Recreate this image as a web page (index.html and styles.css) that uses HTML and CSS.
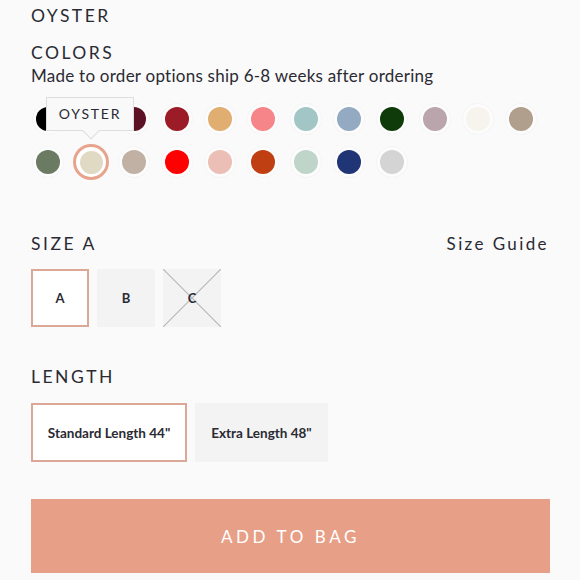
FILE: index.html
```html
<!DOCTYPE html>
<html>
<head>
<meta charset="utf-8">
<link rel="stylesheet" href="styles.css">
</head>
<body>
<div class="page">
  <div class="name">OYSTER</div>
  <div class="label colors-label">COLORS</div>
  <div class="note">Made to order options ship 6-8 weeks after ordering</div>

  <div class="swatches">
    <div class="sw"><span style="background:#000000"></span></div>
    <div class="sw"><span style="background:#3a1018"></span></div>
    <div class="sw"><span style="background:#5c1222"></span></div>
    <div class="sw"><span style="background:#9b1b26"></span></div>
    <div class="sw"><span style="background:#e1ae72"></span></div>
    <div class="sw"><span style="background:#f6858a"></span></div>
    <div class="sw"><span style="background:#a2c6c6"></span></div>
    <div class="sw"><span style="background:#93aac2"></span></div>
    <div class="sw"><span style="background:#0f3b0a"></span></div>
    <div class="sw"><span style="background:#bba5ad"></span></div>
    <div class="sw"><span style="background:#f7f4ee"></span></div>
    <div class="sw"><span style="background:#b19f8e"></span></div>

    <div class="sw"><span style="background:#6b7a62"></span></div>
    <div class="sw selected">
      <span style="background:#e0dac5"></span>
      <div class="tooltip">OYSTER</div>
    </div>
    <div class="sw"><span style="background:#c1b1a4"></span></div>
    <div class="sw"><span style="background:#ff0000"></span></div>
    <div class="sw"><span style="background:#ebbfb5"></span></div>
    <div class="sw"><span style="background:#c03f12"></span></div>
    <div class="sw"><span style="background:#c0d5c9"></span></div>
    <div class="sw"><span style="background:#1f3576"></span></div>
    <div class="sw"><span style="background:#d4d4d4"></span></div>
  </div>

  <div class="size-head">
    <div class="label">SIZE A</div>
    <div class="guide">Size Guide</div>
  </div>
  <div class="sizes">
    <div class="box active">A</div>
    <div class="box">B</div>
    <div class="box disabled">
      <svg class="cross" viewBox="0 0 58 58" preserveAspectRatio="none"><line x1="0" y1="0" x2="58" y2="58"/><line x1="58" y1="0" x2="0" y2="58"/></svg>
      <span>C</span>
    </div>
  </div>

  <div class="label length-label">LENGTH</div>
  <div class="lengths">
    <div class="lbox active standard">Standard Length 44"</div>
    <div class="lbox extra">Extra Length 48"</div>
  </div>

  <div class="bag">ADD TO BAG</div>
</div>
</body>
</html>
```

FILE: styles.css
```css
html, body {
  margin: 0;
  padding: 0;
  background: #fafafa;
}
body {
  font-family: "Lato", "Open Sans", sans-serif;
  color: #2a2a33;
}
.page {
  width: 519px;
  padding: 5px 0 0 31px;
}
.name, .label {
  font-size: 17.5px;
  letter-spacing: 2.5px;
  line-height: 22px;
  font-weight: 400;
}
.colors-label {
  margin-top: 15px;
}
.note {
  font-size: 17px;
  line-height: 22px;
  margin-top: 1px;
  letter-spacing: 0.25px;
}
.swatches {
  display: grid;
  grid-template-columns: repeat(12, 30px);
  grid-auto-rows: 30px;
  column-gap: 13px;
  row-gap: 13px;
  margin: 17px 0 0 2px;
}
.sw {
  position: relative;
  width: 30px;
  height: 30px;
  border-radius: 50%;
  background: #fcfcfc;
  box-shadow: 0 0 0 1px #f5f5f5;
  display: flex;
  align-items: center;
  justify-content: center;
}
.sw span {
  display: block;
  width: 24px;
  height: 24px;
  border-radius: 50%;
}
.sw.selected {
  box-shadow: 0 0 0 3px #e8a38d;
  background: #ffffff;
}
.sw.selected span {
  width: 23px;
  height: 23px;
}
.tooltip {
  position: absolute;
  left: -30px;
  top: -50px;
  width: 88px;
  height: 34px;
  box-sizing: border-box;
  background: #f9f9f9;
  border: 1px solid #dedede;
  font-size: 14px;
  letter-spacing: 1.8px;
  line-height: 32px;
  text-align: center;
  color: #2a2a33;
  z-index: 2;
}
.tooltip::after {
  content: "";
  position: absolute;
  left: 38px;
  bottom: -7px;
  width: 11px;
  height: 11px;
  background: #f9f9f9;
  border-right: 1px solid #dedede;
  border-bottom: 1px solid #dedede;
  transform: rotate(45deg);
}
.size-head {
  display: flex;
  justify-content: space-between;
  align-items: center;
  margin-top: 56px;
  width: 518px;
}
.guide {
  font-size: 17px;
  letter-spacing: 2.4px;
  line-height: 22px;
}
.sizes {
  display: flex;
  gap: 8px;
  margin-top: 14px;
}
.box {
  position: relative;
  width: 58px;
  height: 58px;
  box-sizing: border-box;
  background: #f3f3f3;
  display: flex;
  align-items: center;
  justify-content: center;
  font-size: 13px;
  font-weight: 700;
}
.box.active {
  background: #ffffff;
  border: 2px solid #dba898;
}
.cross {
  position: absolute;
  inset: 0;
  width: 58px;
  height: 58px;
}
.cross line {
  stroke: #b8b8b8;
  stroke-width: 1.2;
}
.box.disabled span {
  position: relative;
}
.length-label {
  margin-top: 39px;
}
.lengths {
  display: flex;
  gap: 8px;
  margin-top: 15px;
}
.lbox {
  height: 59px;
  box-sizing: border-box;
  background: #f3f3f3;
  display: flex;
  align-items: center;
  justify-content: center;
  font-size: 13.5px;
  font-weight: 700;
}
.lbox.standard {
  width: 156px;
}
.lbox.extra {
  width: 133px;
}
.lbox.active {
  background: #ffffff;
  border: 2px solid #dba898;
}
.bag {
  margin-top: 37px;
  width: 519px;
  height: 74px;
  background: #e79f88;
  color: #ffffff;
  font-size: 17px;
  letter-spacing: 3.6px;
  display: flex;
  align-items: center;
  justify-content: center;
}
```
